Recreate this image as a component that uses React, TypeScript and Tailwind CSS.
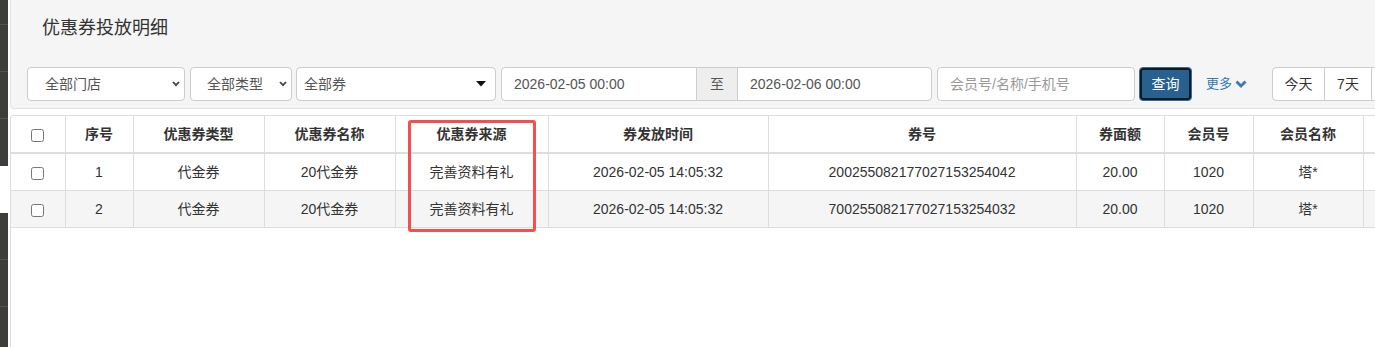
import React from 'react';

const font = "font-['Liberation_Sans','Noto_Sans_CJK_SC',sans-serif]";

const Chevron = () => (
  <svg width="8" height="6" viewBox="0 0 8 6" className="shrink-0">
    <polyline points="1,1 4,4.2 7,1" fill="none" stroke="#444" strokeWidth="1.8" />
  </svg>
);

const columns = [
  { title: '', w: 'w-[54px]' },
  { title: '序号', w: 'w-[68px]' },
  { title: '优惠券类型', w: 'w-[131px]' },
  { title: '优惠券名称', w: 'w-[131px]' },
  { title: '优惠券来源', w: 'w-[153px]' },
  { title: '券发放时间', w: 'w-[220px]' },
  { title: '券号', w: 'w-[308px]' },
  { title: '券面额', w: 'w-[88px]' },
  { title: '会员号', w: 'w-[89px]' },
  { title: '会员名称', w: 'w-[110px]' },
  { title: '', w: 'w-[160px]' },
];

const rows = [
  ['1', '代金券', '20代金券', '完善资料有礼', '2026-02-05 14:05:32', '200255082177027153254042', '20.00', '1020', '塔*', ''],
  ['2', '代金券', '20代金券', '完善资料有礼', '2026-02-05 14:05:32', '700255082177027153254032', '20.00', '1020', '塔*', ''],
];

export default function App() {
  return (
    <div className={`relative flex w-[1375px] h-[347px] overflow-hidden bg-white ${font}`}>
      {/* sidebar edge */}
      <div className="flex flex-col w-[8px] shrink-0">
        <div className="h-[25px] bg-[#3d3e3a] border-b border-[#51524e]" />
        <div className="h-[47px] bg-[#3d3e3a] border-b border-[#51524e]" />
        <div className="h-[47px] bg-[#3d3e3a] border-b border-[#51524e]" />
        <div className="h-[47px] bg-[#3d3e3a]" />
        <div className="h-[47px] bg-white" />
        <div className="h-[47px] bg-[#3d3e3a] border-b border-[#51524e]" />
        <div className="h-[47px] bg-[#3d3e3a] border-b border-[#51524e]" />
        <div className="flex-1 bg-[#3d3e3a]" />
      </div>

      <div className="flex flex-col flex-1 pl-[2px] min-w-0">
        {/* filter well */}
        <div className="h-[109px] shrink-0 bg-[#f5f5f5] border-l border-b border-[#e3e3e3] rounded-bl-[4px] pl-[16px]">
          <h1 className="pt-[18px] pl-[15px] text-[18px] leading-[20px] text-[#333] font-normal">优惠券投放明细</h1>
          <div className="flex items-center mt-[29px] h-[34px] text-[14px] text-[#555] whitespace-nowrap">
            <div className="flex shrink-0 items-center justify-between w-[158px] h-[34px] bg-white border border-[#ccc] rounded-[4px] pl-[17px] pr-[4px]">
              <span>全部门店</span>
              <Chevron />
            </div>
            <div className="flex shrink-0 items-center justify-between w-[102px] h-[34px] ml-[5px] bg-white border border-[#ccc] rounded-[4px] pl-[16px] pr-[4px]">
              <span>全部类型</span>
              <Chevron />
            </div>
            <div className="flex shrink-0 items-center justify-between w-[200px] h-[34px] ml-[4px] bg-white border border-[#ccc] rounded-[4px] pl-[7px] pr-[9px]">
              <span>全部券</span>
              <svg width="10" height="6" viewBox="0 0 10 6">
                <polygon points="0,0 10,0 5,5.5" fill="#111" />
              </svg>
            </div>
            <div className="flex shrink-0 h-[34px] ml-[5px]">
              <div className="flex items-center w-[196px] bg-white border border-[#ccc] rounded-l-[4px] pl-[12px]">2026-02-05 00:00</div>
              <div className="flex items-center justify-center w-[40px] bg-[#eee] border-y border-[#ccc] text-[#555]">至</div>
              <div className="flex items-center w-[195px] bg-white border border-[#ccc] rounded-r-[4px] pl-[12px]">2026-02-06 00:00</div>
            </div>
            <div className="flex shrink-0 items-center w-[198px] h-[34px] ml-[5px] bg-white border border-[#ccc] rounded-[4px] pl-[12px] text-[#999]">
              会员号/名称/手机号
            </div>
            <button className="shrink-0 w-[53px] h-[34px] ml-[4px] bg-[#286090] border border-[#2e6da4] rounded-[4px] shadow-[inset_0_0_0_2px_#0e1a24] text-white text-[14px]">
              查询
            </button>
            <div className="flex shrink-0 items-center gap-[3px] ml-[14px] text-[13px] text-[#337ab7]">
              <span>更多</span>
              <svg width="12" height="8" viewBox="0 0 12 8">
                <polyline points="1.5,1.5 6,6 10.5,1.5" fill="none" stroke="#337ab7" strokeWidth="2.8" />
              </svg>
            </div>
            <div className="flex shrink-0 h-[34px] ml-[25px] text-[#333]">
              <div className="flex items-center justify-center w-[53px] bg-white border border-[#ccc] rounded-l-[4px]">今天</div>
              <div className="flex items-center justify-center w-[47px] bg-white border-y border-r border-[#ccc]">7天</div>
              <div className="w-[60px] bg-white border-y border-r border-[#ccc]" />
            </div>
          </div>
        </div>

        {/* table panel */}
        <div className="flex-1 mt-[6px] border-l border-t border-[#ddd] rounded-tl-[4px] overflow-hidden">
          <table className="table-fixed border-collapse w-[1512px] text-[14px] text-[#333]">
            <thead>
              <tr>
                {columns.map((c, i) => (
                  <th
                    key={i}
                    className={`${c.w} h-[36px] px-2 py-2 leading-[20px] font-bold text-center border-r border-b-2 border-[#ddd]`}
                  >
                    {i === 0 ? (
                      <input type="checkbox" className="w-[13px] h-[13px] align-middle" readOnly />
                    ) : (
                      c.title
                    )}
                  </th>
                ))}
              </tr>
            </thead>
            <tbody>
              {rows.map((r, ri) => (
                <tr key={ri} className={ri % 2 === 1 ? 'bg-[#f5f5f5]' : 'bg-white'}>
                  <td className="h-[36px] px-2 py-2 leading-[20px] text-center border-r border-b border-[#ddd]">
                    <input type="checkbox" className="w-[13px] h-[13px] align-middle" readOnly />
                  </td>
                  {r.map((v, ci) => (
                    <td key={ci} className="h-[36px] px-2 py-2 leading-[20px] text-center border-r border-b border-[#ddd] whitespace-nowrap">
                      {v}
                    </td>
                  ))}
                </tr>
              ))}
            </tbody>
          </table>
        </div>
      </div>

      {/* annotation highlight */}
      <div className="absolute left-[408px] top-[120px] w-[128px] h-[112px] border-[3px] border-[#f24f4f] rounded-[3px] pointer-events-none" />
    </div>
  );
}
